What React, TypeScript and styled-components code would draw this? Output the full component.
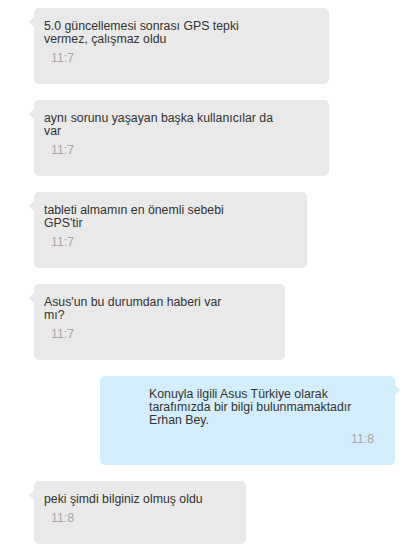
import React from "react";
import styled, { createGlobalStyle, css } from "styled-components";

const Global = createGlobalStyle`
  html, body { margin: 0; padding: 0; background: #ffffff; }
  body { font-family: "Liberation Sans", Arial, sans-serif; }
`;

const Thread = styled.div`
  display: flex;
  flex-direction: column;
  align-items: flex-start;
  gap: 16px;
  padding-top: 8px;
`;

const Bubble = styled.div<{ $out?: boolean; $w: number }>`
  position: relative;
  box-sizing: border-box;
  width: ${(p) => p.$w}px;
  margin-left: ${(p) => (p.$out ? 100 : 34)}px;
  padding: ${(p) => (p.$out ? "12px 21px 19px 49px" : "12px 10px 19px 10px")};
  border-radius: 5px;
  background: ${(p) => (p.$out ? "#d3edfc" : "#e9e9e9")};
  display: flex;
  flex-direction: column;
  &::before {
    content: "";
    position: absolute;
    top: 9px;
    border-top: 5px solid transparent;
    border-bottom: 5px solid transparent;
    ${(p) =>
      p.$out
        ? css`
            right: -5px;
            border-left: 5px solid #d3edfc;
          `
        : css`
            left: -5px;
            border-right: 5px solid #e9e9e9;
          `}
  }
`;

const Text = styled.div`
  font-size: 12.3px;
  line-height: 13px;
  color: #333333;
`;

const Time = styled.div<{ $out?: boolean }>`
  margin-top: 6px;
  font-size: 12.3px;
  line-height: 13px;
  color: #a6a6a6;
  ${(p) =>
    p.$out
      ? css`
          align-self: flex-end;
        `
      : css`
          margin-left: 7px;
        `}
`;

type Msg = { lines: string[]; time: string; w: number; out?: boolean };

const msgs: Msg[] = [
  { lines: ["5.0 güncellemesi sonrası GPS tepki", "vermez, çalışmaz oldu"], time: "11:7", w: 295 },
  { lines: ["aynı sorunu yaşayan başka kullanıcılar da", "var"], time: "11:7", w: 295 },
  { lines: ["tableti almamın en önemli sebebi", "GPS'tir"], time: "11:7", w: 273 },
  { lines: ["Asus'un bu durumdan haberi var", "mı?"], time: "11:7", w: 251 },
  {
    lines: ["Konuyla ilgili Asus Türkiye olarak", "tarafımızda bir bilgi bulunmamaktadır", "Erhan Bey."],
    time: "11:8",
    w: 295,
    out: true,
  },
  { lines: ["peki şimdi bilginiz olmuş oldu"], time: "11:8", w: 212 },
];

export default function App() {
  return (
    <>
      <Global />
      <Thread>
        {msgs.map((m, i) => (
          <Bubble key={i} $out={m.out} $w={m.w}>
            <Text>
              {m.lines.map((l, j) => (
                <React.Fragment key={j}>
                  {j > 0 && <br />}
                  {l}
                </React.Fragment>
              ))}
            </Text>
            <Time $out={m.out}>{m.time}</Time>
          </Bubble>
        ))}
      </Thread>
    </>
  );
}
